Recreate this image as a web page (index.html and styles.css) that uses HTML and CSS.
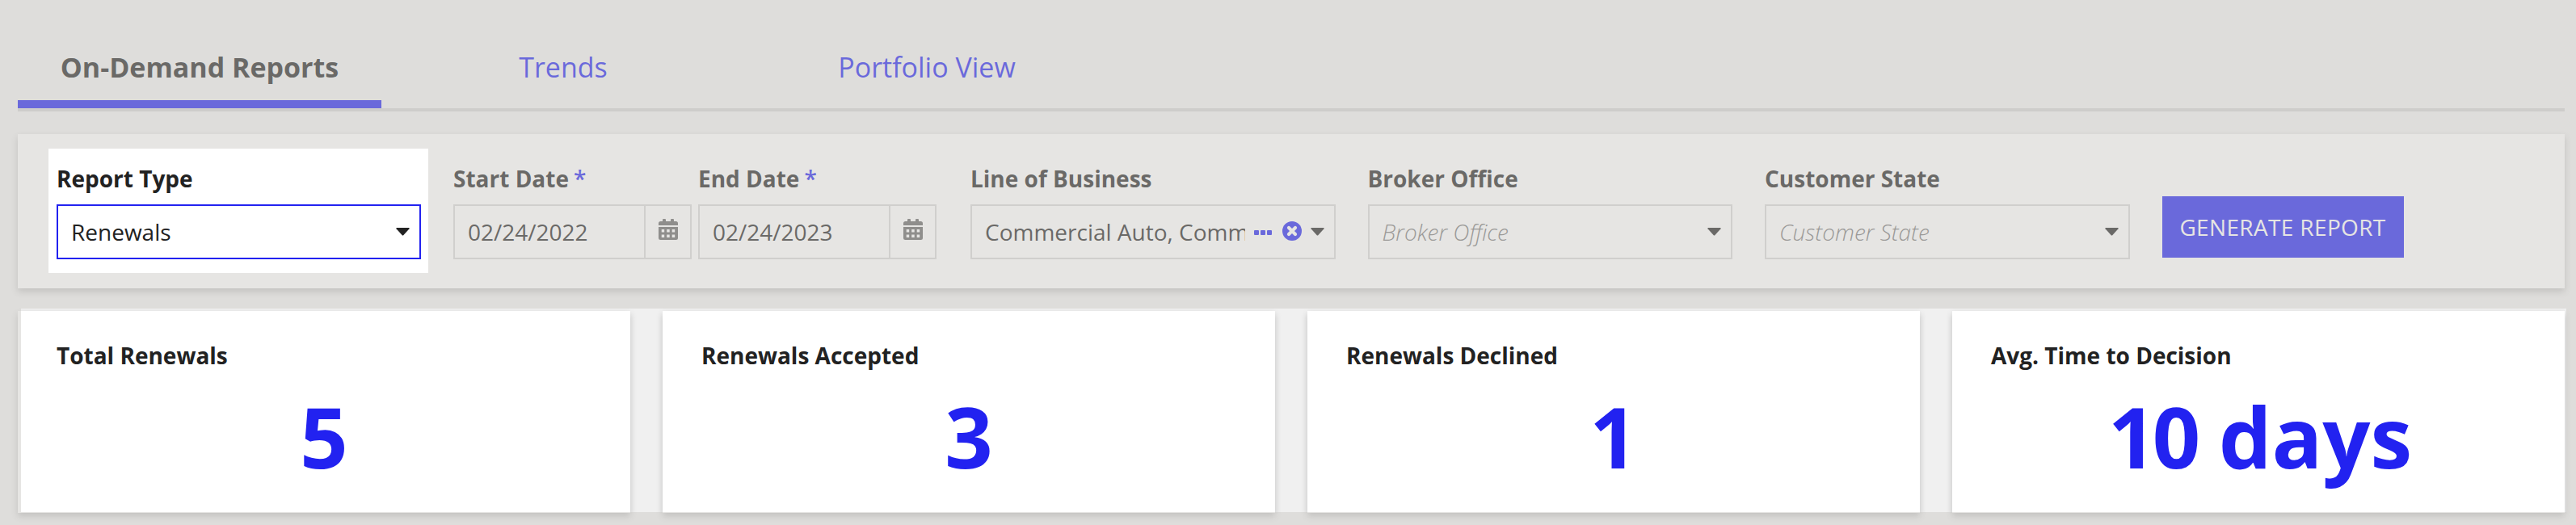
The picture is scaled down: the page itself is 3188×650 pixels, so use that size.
FILE: index.html
```html
<!DOCTYPE html>
<html lang="en">
<head>
  <meta charset="UTF-8">
  <meta name="viewport" content="width=device-width, initial-scale=1.0">
  <title>On-Demand Reports</title>
  <link rel="stylesheet" href="styles.css">
</head>
<body>
  <nav class="tabs">
    <a href="#reports" class="tab selected">On-Demand Reports</a>
    <a href="#trends" class="tab">Trends</a>
    <a href="#portfolio" class="tab">Portfolio View</a>
  </nav>

  <form class="filters">
    <div class="field">
      <label>Report Type</label>
      <div class="select active">
        <span class="value">Renewals</span>
        <svg class="caret" viewBox="0 0 17 10"><path d="M1 0h15q1 .3.500 1.200L9.500 9q-1 1-2 0L.5 1.200Q0 .3 1 0z"/></svg>
      </div>
    </div>

    <div class="dates">
      <div class="field">
        <label>Start Date<span class="required">*</span></label>
        <div class="date">
          <span class="value">02/24/2022</span>
          <span class="date-button">
            <svg class="calendar" viewBox="0 0 24 26"><path fill-rule="evenodd" d="M0 8V5.500Q0 3 2.500 3H5V1q0-1 1-1h2q1 0 1 1v2h6V1q0-1 1-1h2q1 0 1 1v2h2.500Q24 3 24 5.500V8zM0 10h24v13.500q0 2.500-2.500 2.500h-19Q0 26 0 23.500zM3.700 13v3.500h3.500V13zm6.500 0v3.500h3.500V13zm6.500 0v3.500h3.500V13zM3.700 19.500V23h3.500v-3.500zm6.500 0V23h3.500v-3.500zm6.500 0V23h3.500v-3.500z"/></svg>
          </span>
        </div>
      </div>
      <div class="field">
        <label>End Date<span class="required">*</span></label>
        <div class="date">
          <span class="value">02/24/2023</span>
          <span class="date-button">
            <svg class="calendar" viewBox="0 0 24 26"><path fill-rule="evenodd" d="M0 8V5.500Q0 3 2.500 3H5V1q0-1 1-1h2q1 0 1 1v2h6V1q0-1 1-1h2q1 0 1 1v2h2.500Q24 3 24 5.500V8zM0 10h24v13.500q0 2.500-2.500 2.500h-19Q0 26 0 23.500zM3.700 13v3.500h3.500V13zm6.500 0v3.500h3.500V13zm6.500 0v3.500h3.500V13zM3.700 19.500V23h3.500v-3.500zm6.500 0V23h3.500v-3.500zm6.500 0V23h3.500v-3.500z"/></svg>
          </span>
        </div>
      </div>
    </div>

    <div class="field">
      <label>Line of Business</label>
      <div class="select">
        <span class="value">Commercial Auto, Comme</span>
        <svg class="dots" viewBox="0 0 22 6"><rect width="6" height="6" rx="1"/><rect x="8" width="6" height="6" rx="1"/><rect x="16" width="6" height="6" rx="1"/></svg>
        <svg class="clear" viewBox="0 0 24 24"><circle cx="12" cy="12" r="12"/><path d="M8 8l8 8M16 8l-8 8"/></svg>
        <svg class="caret" viewBox="0 0 17 10"><path d="M1 0h15q1 .3.500 1.200L9.500 9q-1 1-2 0L.5 1.200Q0 .3 1 0z"/></svg>
      </div>
    </div>

    <div class="field">
      <label>Broker Office</label>
      <div class="select">
        <span class="value placeholder">Broker Office</span>
        <svg class="caret" viewBox="0 0 17 10"><path d="M1 0h15q1 .3.500 1.200L9.500 9q-1 1-2 0L.5 1.200Q0 .3 1 0z"/></svg>
      </div>
    </div>

    <div class="field">
      <label>Customer State</label>
      <div class="select">
        <span class="value placeholder">Customer State</span>
        <svg class="caret" viewBox="0 0 17 10"><path d="M1 0h15q1 .3.500 1.200L9.500 9q-1 1-2 0L.5 1.200Q0 .3 1 0z"/></svg>
      </div>
    </div>

    <button type="button" class="generate">GENERATE REPORT</button>
  </form>

  <div class="cards">
    <div class="card">
      <div class="card-title">Total Renewals</div>
      <div class="card-value">5</div>
    </div>
    <div class="card">
      <div class="card-title">Renewals Accepted</div>
      <div class="card-value">3</div>
    </div>
    <div class="card">
      <div class="card-title">Renewals Declined</div>
      <div class="card-value">1</div>
    </div>
    <div class="card">
      <div class="card-title">Avg. Time to Decision</div>
      <div class="card-value"><span class="count">10</span> days</div>
    </div>
  </div>

  <div class="overlay"></div>
</body>
</html>
```
FILE: styles.css
```css
* {
  box-sizing: border-box;
}

body {
  position: relative;
  margin: 0;
  padding: 42px 14px 0 22px;
  height: 650px;
  overflow: hidden;
  background-color: #f0f0f0;
  color: #222;
  font-family: 'Open Sans', sans-serif;
  font-size: 28px;
}

.tabs,
.filters,
.cards {
  display: flex;
  width: 3152px;
}

.tabs {
  height: 96px;
  border-bottom: 4px solid #d5d5d5;
}

.tab {
  width: 450px;
  height: 92px;
  line-height: 82px;
  font-size: 34px;
  text-align: center;
  text-decoration: none;
  color: #2222f0;
}

.tab.selected {
  border-bottom: 10px solid #2222f0;
  font-weight: bold;
  color: #222;
}

.filters {
  gap: 40px;
  height: 191px;
  margin-top: 28px;
  padding: 35px 48px 0;
  background-color: #fff;
  box-shadow: 0 4px 8px rgba(0, 0, 0, 0.2);
}

.field {
  flex-shrink: 0;
  width: 451.5px;
}

.filters > .field:first-child {
  width: 451px;
}

.field label {
  display: block;
  height: 40px;
  margin-bottom: 12px;
  line-height: 40px;
  font-weight: bold;
}

.required {
  margin-left: 6px;
  font-weight: 600;
  color: #2222f0;
}

.select,
.date {
  display: flex;
  align-items: center;
  height: 68px;
  border: 2px solid #d8d8d8;
}

.select {
  padding: 0 12px 0 16px;
}

.select.active {
  border-color: #2222f0;
}

.value {
  flex: 1;
  min-width: 0;
  overflow: hidden;
  white-space: nowrap;
}

.placeholder {
  font-style: italic;
  font-weight: 300;
  color: #777;
}

.caret,
.dots,
.clear {
  flex-shrink: 0;
}

.caret {
  width: 17px;
  height: 10px;
  fill: #222;
}

.dots {
  width: 22px;
  height: 6px;
  margin: 2px 0 0 11px;
  fill: #2222f0;
}

.clear {
  width: 24px;
  height: 24px;
  margin: 0 11px 2px 13px;
  fill: #2222f0;
}

.clear path {
  stroke: #fff;
  stroke-width: 4.2px;
  stroke-linecap: round;
}

.dates {
  display: flex;
  gap: 8px;
  margin-right: 2px;
}

.dates .field {
  width: 295px;
}

.date {
  padding-left: 16px;
}

.date-button {
  display: flex;
  justify-content: center;
  width: 57px;
  height: 64px;
  padding-top: 16px;
  border-left: 2px solid #d8d8d8;
}

.calendar {
  width: 24px;
  height: 26px;
  fill: #636363;
}

.generate {
  width: 299px;
  height: 76px;
  margin-top: 42px;
  padding: 0;
  border: none;
  background-color: #2222f0;
  color: #fff;
  font-family: inherit;
  font-size: 28px;
  letter-spacing: 0.35px;
}

.cards {
  gap: 40px;
  margin-top: 28px;
}

.card {
  flex: 1;
  height: 250px;
  padding: 35px 48px 0;
  background-color: #fff;
  box-shadow: 0 4px 8px rgba(0, 0, 0, 0.2);
}

.card-title {
  line-height: 40px;
  font-weight: bold;
}

.card-value {
  margin-top: 20px;
  line-height: 120px;
  font-size: 104px;
  font-weight: bold;
  text-align: center;
  color: #2222f0;
}

.count {
  margin-left: 4px;
  letter-spacing: -4.6px;
}

/* dims the page, with holes over the report type and the cards */
.overlay {
  position: absolute;
  top: 0;
  left: 0;
  width: 100%;
  height: 100%;
  background-color: rgba(198, 196, 192, 0.443);
  clip-path: path(evenodd, "M0 0H3188V650H0ZM60 184H530V338H60ZM26 382H3176V634H26Z");
  pointer-events: none;
}
```
